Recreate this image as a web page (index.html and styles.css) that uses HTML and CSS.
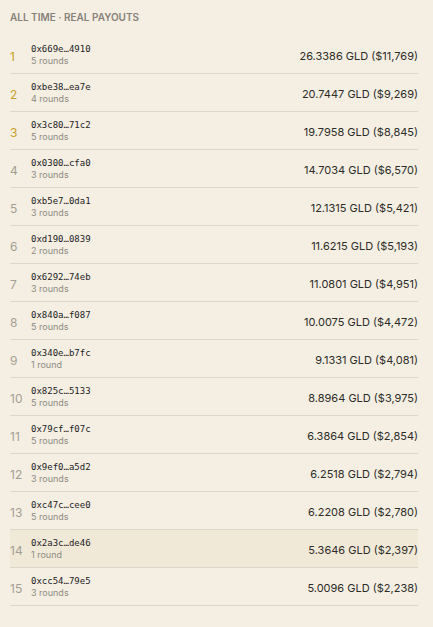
FILE: index.html
```html
<!DOCTYPE html>
<html>
<head>
<meta charset="utf-8">
<link rel="stylesheet" href="styles.css">
</head>
<body>
<div class="panel">
  <div class="title">ALL TIME · REAL PAYOUTS</div>
  <div class="list">
    <div class="row"><span class="rank gold">1</span><div class="who"><span class="addr">0x669e…4910</span><span class="rounds">5 rounds</span></div><span class="amt">26.3386 GLD ($11,769)</span></div>
    <div class="row"><span class="rank gold">2</span><div class="who"><span class="addr">0xbe38…ea7e</span><span class="rounds">4 rounds</span></div><span class="amt">20.7447 GLD ($9,269)</span></div>
    <div class="row"><span class="rank gold">3</span><div class="who"><span class="addr">0x3c80…71c2</span><span class="rounds">5 rounds</span></div><span class="amt">19.7958 GLD ($8,845)</span></div>
    <div class="row"><span class="rank">4</span><div class="who"><span class="addr">0x0300…cfa0</span><span class="rounds">3 rounds</span></div><span class="amt">14.7034 GLD ($6,570)</span></div>
    <div class="row"><span class="rank">5</span><div class="who"><span class="addr">0xb5e7…0da1</span><span class="rounds">3 rounds</span></div><span class="amt">12.1315 GLD ($5,421)</span></div>
    <div class="row"><span class="rank">6</span><div class="who"><span class="addr">0xd190…0839</span><span class="rounds">2 rounds</span></div><span class="amt">11.6215 GLD ($5,193)</span></div>
    <div class="row"><span class="rank">7</span><div class="who"><span class="addr">0x6292…74eb</span><span class="rounds">3 rounds</span></div><span class="amt">11.0801 GLD ($4,951)</span></div>
    <div class="row"><span class="rank">8</span><div class="who"><span class="addr">0x840a…f087</span><span class="rounds">5 rounds</span></div><span class="amt">10.0075 GLD ($4,472)</span></div>
    <div class="row"><span class="rank">9</span><div class="who"><span class="addr">0x340e…b7fc</span><span class="rounds">1 round</span></div><span class="amt">9.1331 GLD ($4,081)</span></div>
    <div class="row"><span class="rank">10</span><div class="who"><span class="addr">0x825c…5133</span><span class="rounds">5 rounds</span></div><span class="amt">8.8964 GLD ($3,975)</span></div>
    <div class="row"><span class="rank">11</span><div class="who"><span class="addr">0x79cf…f07c</span><span class="rounds">5 rounds</span></div><span class="amt">6.3864 GLD ($2,854)</span></div>
    <div class="row"><span class="rank">12</span><div class="who"><span class="addr">0x9ef0…a5d2</span><span class="rounds">3 rounds</span></div><span class="amt">6.2518 GLD ($2,794)</span></div>
    <div class="row"><span class="rank">13</span><div class="who"><span class="addr">0xc47c…cee0</span><span class="rounds">5 rounds</span></div><span class="amt">6.2208 GLD ($2,780)</span></div>
    <div class="row hl"><span class="rank">14</span><div class="who"><span class="addr">0x2a3c…de46</span><span class="rounds">1 round</span></div><span class="amt">5.3646 GLD ($2,397)</span></div>
    <div class="row"><span class="rank">15</span><div class="who"><span class="addr">0xcc54…79e5</span><span class="rounds">3 rounds</span></div><span class="amt">5.0096 GLD ($2,238)</span></div>
  </div>
</div>
</body>
</html>
```
FILE: styles.css
```css
html, body {
  margin: 0;
  padding: 0;
  background: #f5efe3;
}
body {
  font-family: Inter, "Liberation Sans", sans-serif;
  color: #2a2824;
}
.panel {
  padding: 10px 15px 0 10px;
}
.title {
  font-size: 10px;
  font-weight: 600;
  color: #86827a;
  line-height: 14px;
  height: 26px;
}
.list {
  display: flex;
  flex-direction: column;
}
.row {
  display: flex;
  align-items: center;
  height: 37px;
  border-bottom: 1px solid #dcd6ca;
}
.row.hl {
  background: #f1e9d8;
}
.rank {
  width: 21px;
  font-size: 12px;
  color: #a39e93;
  padding-top: 3px;
}
.rank.gold {
  color: #c9a02a;
}
.who {
  display: flex;
  flex-direction: column;
  flex: 1;
}
.addr {
  font-family: "DejaVu Sans Mono", "Liberation Mono", monospace;
  font-size: 9px;
  line-height: 12px;
  color: #24221e;
}
.rounds {
  font-size: 9px;
  line-height: 12px;
  color: #8e8a82;
}
.amt {
  font-size: 11px;
  color: #2e2c28;
  padding-top: 2px;
}
```
